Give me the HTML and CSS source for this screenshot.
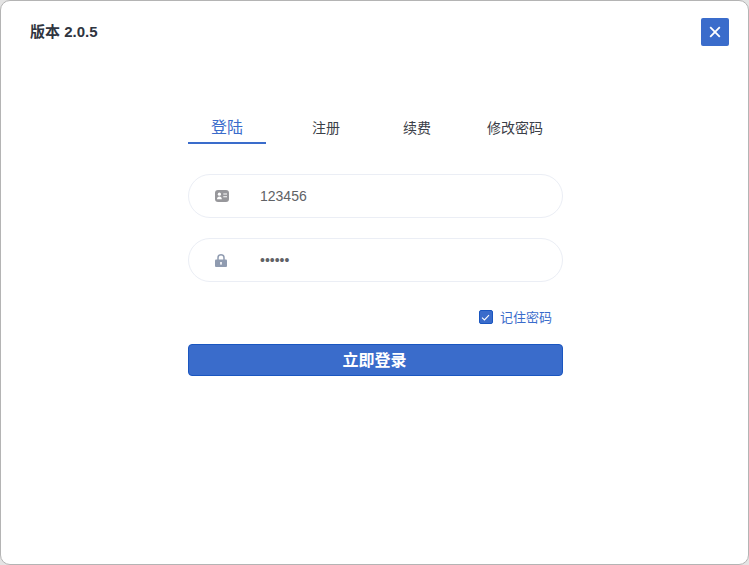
FILE: index.html
```html
<!DOCTYPE html>
<html lang="zh-CN">
<head>
  <meta charset="UTF-8" />
  <meta name="viewport" content="width=device-width, initial-scale=1.0"/>
  <title>登陆</title>
  <link rel="stylesheet" href="styles.css">
</head>
<body>

<div class="dialog">
  <header class="top-bar">
    <span class="version">版本 2.0.5</span>
    <button class="close-btn" type="button" aria-label="关闭">
      <svg width="12" height="12" viewBox="0 0 12 12"><path d="M1.2 1.2 10.8 10.8M10.8 1.2 1.2 10.8" stroke="#fff" stroke-width="1.8" fill="none"/></svg>
    </button>
  </header>

  <form class="login-form">
    <div class="tabs">
      <a class="tab active">登陆</a>
      <a class="tab tab-2">注册</a>
      <a class="tab tab-3">续费</a>
      <a class="tab tab-4">修改密码</a>
    </div>

    <div class="field">
      <svg class="field-icon" width="14" height="12" viewBox="0 0 14 12">
        <rect width="14" height="12" rx="3" fill="#97979b"/>
        <circle cx="4.4" cy="4.2" r="1.6" fill="#fff"/>
        <path d="M2 9.2c0-1.800 1-2.800 2.400-2.800s2.400 1 2.400 2.800z" fill="#fff"/>
        <path d="M8.300 4h3.700M8.300 6.800h3.700" stroke="#fff" stroke-width="1.100"/>
      </svg>
      <input class="field-input" type="text" value="123456">
    </div>

    <div class="field">
      <svg class="field-icon lock" width="12" height="13" viewBox="0 0 12 13">
        <path d="M3 6V3.800a3 3 0 0 1 6 0V6" stroke="#8f9bb0" stroke-width="1.500" fill="none"/>
        <rect y="5.500" width="12" height="7.500" rx="1" fill="#8f9bb0"/>
        <rect x="5.200" y="8" width="1.600" height="2.600" fill="#fff"/>
      </svg>
      <input class="field-input" type="password" value="123456">
    </div>

    <label class="remember">
      <span class="check">
        <svg width="9" height="7" viewBox="0 0 10 8"><path d="M1 4.200 3.800 6.800 9 1.200" stroke="#fff" stroke-width="1.200" fill="none"/></svg>
      </span>
      <span class="remember-text">记住密码</span>
    </label>

    <button class="submit-btn" type="button">立即登录</button>
  </form>
</div>

</body>
</html>
```

FILE: styles.css
```css
* {
  box-sizing: border-box;
}
html, body {
  height: 100%;
}
body {
  margin: 0;
  background: #e4e4e4;
  font-family: "Liberation Sans", "Noto Sans CJK SC", sans-serif;
  color: #303133;
}
.dialog {
  height: 565px;
  background: white;
  border: 1px solid #b4b4b4;
  border-radius: 10px;
  padding: 17px 19px 0 29px;
}
.top-bar {
  display: flex;
  justify-content: space-between;
  align-items: flex-start;
}
.version {
  margin-top: 5px;
  font-size: 15px;
  line-height: 17px;
  font-weight: bold;
  color: #2f3540;
}
.close-btn {
  display: flex;
  align-items: center;
  justify-content: center;
  width: 28px;
  height: 28px;
  padding: 0;
  background: #3a6ccb;
  border: none;
  border-radius: 2px;
}
.login-form {
  width: 375px;
  margin: 69px 0 0 158px;
}
.tabs {
  display: flex;
  align-items: flex-end;
  height: 29px;
  font-size: 14px;
  color: #3b4048;
}
.tab {
  line-height: 20px;
  padding-bottom: 6px;
}
.tab.active {
  width: 78px;
  height: 29px;
  padding-bottom: 0;
  text-align: center;
  font-size: 16px;
  line-height: 26px;
  color: #3a6ccb;
  border-bottom: 2px solid #3a6ccb;
}
.tab-2 {
  margin-left: 46px;
}
.tab-3 {
  margin-left: 63px;
}
.tab-4 {
  margin-left: 56px;
}
.field {
  display: flex;
  align-items: center;
  height: 44px;
  margin-top: 20px;
  padding-left: 26px;
  border: 1px solid #ebeef5;
  border-radius: 22px;
}
.tabs + .field {
  margin-top: 30px;
}
.field-icon {
  flex: none;
}
.field-icon.lock {
  margin-right: 2px;
}
.field-input {
  flex: 1;
  min-width: 0;
  margin-left: 31px;
  margin-right: 20px;
  padding: 0;
  border: none;
  outline: none;
  background: none;
  font-family: inherit;
  font-size: 14px;
  color: #606266;
}
.remember {
  display: flex;
  justify-content: flex-end;
  align-items: center;
  gap: 7px;
  height: 20px;
  margin-top: 25px;
  padding-right: 11px;
  font-size: 13px;
  color: #3a6ccb;
}
.remember-text {
  margin-bottom: 2px;
}
.check {
  display: flex;
  align-items: center;
  justify-content: center;
  width: 14px;
  height: 14px;
  background: #3a6ccb;
  border: 1px solid #1a56c0;
  border-radius: 2px;
}
.submit-btn {
  display: block;
  width: 100%;
  height: 32px;
  margin-top: 17px;
  padding: 0 2px 2px 0;
  background: #3a6ccb;
  border: 1px solid #1a56c0;
  border-radius: 4px;
  color: white;
  font-family: inherit;
  font-size: 16px;
  font-weight: bold;
}
```
